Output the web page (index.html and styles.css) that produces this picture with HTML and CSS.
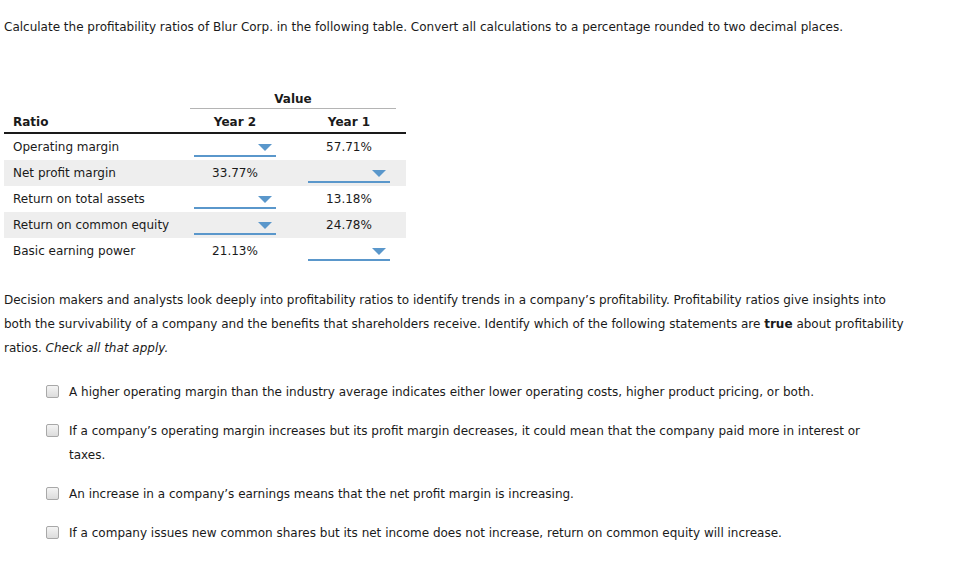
FILE: index.html
```html
<!DOCTYPE html>
<html lang="en">
  <head>
    <meta charset="UTF-8" />
    <title>Profitability Ratios</title>
    <link rel="stylesheet" href="styles.css">
  </head>
  <body>
    <div class="question">
      <p class="intro">Calculate the profitability ratios of Blur Corp. in the following table. Convert all calculations to a percentage rounded to two decimal places.</p>

      <table class="ratios">
        <colgroup>
          <col class="col-name">
          <col class="col-y2">
          <col class="col-y1">
        </colgroup>
        <thead>
          <tr class="group-row">
            <th></th>
            <th colspan="2" class="group"><div class="group-label">Value</div></th>
          </tr>
          <tr class="head-row">
            <th class="name">Ratio</th>
            <th class="y2">Year 2</th>
            <th class="y1">Year 1</th>
          </tr>
        </thead>
        <tbody>
          <tr>
            <td class="name">Operating margin</td>
            <td class="y2"><div class="dropdown"><span class="arrow"></span></div></td>
            <td class="y1">57.71%</td>
          </tr>
          <tr class="alt">
            <td class="name">Net profit margin</td>
            <td class="y2">33.77%</td>
            <td class="y1"><div class="dropdown"><span class="arrow"></span></div></td>
          </tr>
          <tr>
            <td class="name">Return on total assets</td>
            <td class="y2"><div class="dropdown"><span class="arrow"></span></div></td>
            <td class="y1">13.18%</td>
          </tr>
          <tr class="alt">
            <td class="name">Return on common equity</td>
            <td class="y2"><div class="dropdown"><span class="arrow"></span></div></td>
            <td class="y1">24.78%</td>
          </tr>
          <tr>
            <td class="name">Basic earning power</td>
            <td class="y2">21.13%</td>
            <td class="y1"><div class="dropdown"><span class="arrow"></span></div></td>
          </tr>
        </tbody>
      </table>

      <p class="para">Decision makers and analysts look deeply into profitability ratios to identify trends in a company’s profitability. Profitability ratios give insights into both the survivability of a company and the benefits that shareholders receive. Identify which of the following statements are <b>true</b> about profitability ratios. <i>Check all that apply.</i></p>

      <ul class="choices">
        <li><span class="box"></span><span class="text">A higher operating margin than the industry average indicates either lower operating costs, higher product pricing, or both.</span></li>
        <li><span class="box"></span><span class="text">If a company’s operating margin increases but its profit margin decreases, it could mean that the company paid more in interest or taxes.</span></li>
        <li><span class="box"></span><span class="text">An increase in a company’s earnings means that the net profit margin is increasing.</span></li>
        <li><span class="box"></span><span class="text">If a company issues new common shares but its net income does not increase, return on common equity will increase.</span></li>
      </ul>
    </div>
  </body>
</html>
```

FILE: styles.css
```css
body {
  margin: 0;
  background-color: white;
  color: #1a1a1a;
  font-family: Verdana, "DejaVu Sans", sans-serif;
  font-size: 12px;
}

.question {
  padding: 0 4px;
}

.intro {
  margin: 18px 0 0;
  line-height: 18px;
}

.ratios {
  border-collapse: collapse;
  table-layout: fixed;
  margin-top: 51px;
  width: 402px;
}

.col-name {
  width: 186px;
}

.col-y2 {
  width: 90px;
}

.col-y1 {
  width: 126px;
}

.ratios th {
  font-weight: bold;
  padding: 0;
}

.group-row th {
  height: 22px;
}

.group {
  vertical-align: bottom;
}

.group-label {
  border-bottom: 1px solid #b4b4b4;
  padding-bottom: 2px;
  margin-right: 10px;
}

.head-row th {
  height: 21px;
  padding-top: 2px;
  border-bottom: 2px solid #1a1a1a;
}

.ratios td {
  height: 26px;
  padding: 0;
}

.ratios .name {
  text-align: left;
  padding-left: 9px;
}

.ratios .y2 {
  text-align: center;
}

.ratios .y1 {
  text-align: center;
  padding-left: 12px;
}

.alt td {
  background-color: #eeeeee;
}

.dropdown {
  position: relative;
  width: 82px;
  height: 18px;
  margin: 0 auto;
  border-bottom: 2px solid #5a97cb;
}

.arrow {
  position: absolute;
  right: 4px;
  top: 7px;
  width: 0;
  height: 0;
  border-left: 7px solid transparent;
  border-right: 7px solid transparent;
  border-top: 7px solid #5a97cb;
}

.para {
  margin: 24px 0 0;
  max-width: 910px;
  line-height: 24px;
}

.choices {
  list-style: none;
  margin: 20px 0 0;
  padding: 0 0 0 42px;
}

.choices li {
  display: flex;
  align-items: flex-start;
  margin-bottom: 15px;
  line-height: 24px;
}

.box {
  flex: none;
  width: 11px;
  height: 11px;
  margin-top: 5px;
  margin-right: 10px;
  border: 1px solid #a8a8a8;
  border-radius: 2px;
  background: linear-gradient(#f4f4f4, #dcdcdc);
}

.text {
  flex: 1;
  max-width: 820px;
}
```
